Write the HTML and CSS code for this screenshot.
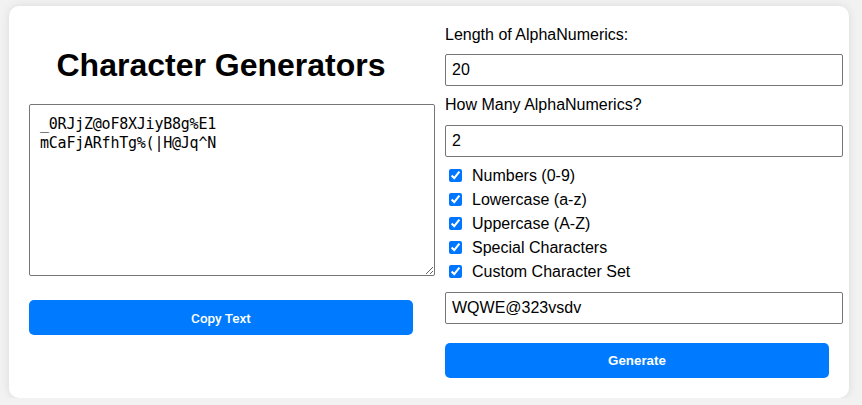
FILE: index.html
```html
<!DOCTYPE html>
<html lang="en">
<head>
<meta charset="utf-8">
<title>Character Generators</title>
<link rel="stylesheet" href="styles.css">
</head>
<body>
<div class="card">
  <div class="col col-left">
    <h1 class="title">Character Generators</h1>
    <textarea class="output" spellcheck="false">_0RJjZ@oF8XJiyB8g%E1
mCaFjARfhTg%(|H@Jq^N</textarea>
    <button class="btn btn-copy" type="button">Copy Text</button>
  </div>
  <div class="col col-right">
    <label class="field-label" for="len">Length of AlphaNumerics:</label>
    <input class="text-input" id="len" type="text" value="20">
    <label class="field-label" for="count">How Many AlphaNumerics?</label>
    <input class="text-input" id="count" type="text" value="2">
    <div class="options">
      <label class="option"><input type="checkbox" class="check" checked><span>Numbers (0-9)</span></label>
      <label class="option"><input type="checkbox" class="check" checked><span>Lowercase (a-z)</span></label>
      <label class="option"><input type="checkbox" class="check" checked><span>Uppercase (A-Z)</span></label>
      <label class="option"><input type="checkbox" class="check" checked><span>Special Characters</span></label>
      <label class="option"><input type="checkbox" class="check" checked><span>Custom Character Set</span></label>
    </div>
    <input class="text-input custom-input" type="text" value="WQWE@323vsdv">
    <button class="btn btn-generate" type="button">Generate</button>
  </div>
</div>
</body>
</html>
```

FILE: styles.css
```css
html, body {
  margin: 0;
  padding: 0;
}

body {
  background: #f2f2f2;
  font-family: "Liberation Sans", Arial, sans-serif;
  color: #000;
}

.card {
  box-sizing: border-box;
  width: 840px;
  height: 392px;
  margin: 6px 0 0 9px;
  padding: 20px;
  background: #fff;
  border-radius: 10px;
  box-shadow: 0 0 10px rgba(0, 0, 0, 0.1);
  display: flex;
  gap: 32px;
}

.col {
  width: 384px;
  flex: none;
  display: flex;
  flex-direction: column;
  align-items: flex-start;
}

.title {
  align-self: stretch;
  margin: 21px 0 20px;
  font-size: 32px;
  line-height: 37px;
  font-weight: bold;
  text-align: center;
}

.output {
  display: block;
  width: 384px;
  height: 150px;
  margin: 0;
  padding: 10px;
  border: 1px solid #767676;
  border-radius: 2px;
  font-family: "DejaVu Sans Mono", monospace;
  font-size: 15px;
  letter-spacing: -0.23px;
  line-height: 18.7px;
  color: #000;
  resize: both;
  outline: none;
}

.btn {
  width: 384px;
  height: 35px;
  border: none;
  border-radius: 5px;
  background: #007bff;
  color: #fff;
  font-size: 13.33px;
  padding: 0;
  cursor: pointer;
}

.btn-copy {
  margin-top: 24px;
  font-family: Roboto, "Liberation Sans", sans-serif;
  font-weight: 500;
  font-size: 13.5px;
}

.btn-generate {
  margin-top: 19px;
  font-family: "Liberation Sans", Arial, sans-serif;
  font-weight: bold;
}

.field-label {
  display: block;
  font-size: 16px;
  line-height: 18.4px;
  margin-bottom: 10px;
}

.text-input {
  width: 384px;
  height: 18px;
  margin: 0 0 10px;
  padding: 6px;
  border: 1px solid #767676;
  border-radius: 2px;
  font-family: "Liberation Sans", Arial, sans-serif;
  font-size: 16px;
  color: #000;
  background: #fff;
  outline: none;
}

.options {
  margin-top: -3px;
  display: flex;
  flex-direction: column;
}

.option {
  height: 24px;
  display: flex;
  align-items: center;
  gap: 10px;
  font-size: 16px;
}

.check {
  width: 13px;
  height: 13px;
  margin: 0 0 0 4px;
}

.custom-input {
  margin-top: 8px;
  margin-bottom: 0;
}
```
